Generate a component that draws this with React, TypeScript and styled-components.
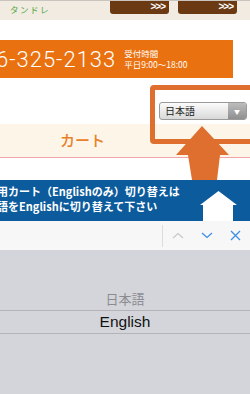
import React from 'react';
import styled, { createGlobalStyle } from 'styled-components';

const Global = createGlobalStyle`
  html, body { margin: 0; padding: 0; background: #fff; }
  body {
    width: 250px; height: 394px; overflow: hidden;
    font-family: "Noto Sans CJK JP", "Noto Sans", sans-serif;
  }
`;

const Screen = styled.div`
  width: 250px; height: 394px; overflow: hidden;
  display: flex; flex-direction: column; background: #fff;
`;

const Header = styled.header`
  flex: none; height: 20px; box-sizing: border-box;
  background: #f2ebe1; border-top: 1px solid #c9c4bd;
  display: flex; align-items: flex-start;
  padding: 0 13px 0 10px; overflow: hidden;
`;

const Logo = styled.div`
  flex: 1; margin-top: 3px;
  font-size: 8.5px; line-height: 10px; color: #4fa843; letter-spacing: 1.5px;
`;

const NavButton = styled.div`
  width: 59px; height: 26px; margin-top: -13px; margin-left: 9px;
  box-sizing: border-box; padding: 0 4px 0 0;
  background: #6b3a12; border-radius: 0 0 3px 3px;
  color: #fff; font-weight: 700;
  display: flex; flex-direction: column; align-items: flex-end;
`;

const NavLabel = styled.span`
  align-self: center; font-size: 9px; line-height: 14px; white-space: nowrap;
`;

const NavMore = styled.span`
  font-family: "Liberation Sans", sans-serif; font-weight: 700;
  font-size: 10px; line-height: 10px; letter-spacing: -1px;
`;

const PhoneBar = styled.div`
  flex: none; margin-top: 20px; width: 233px; height: 38px;
  background: #e9710f; display: flex; align-items: center; overflow: hidden;
`;

const PhoneNumber = styled.div`
  margin-left: -4px; font-family: Roboto, "Liberation Sans", sans-serif;
  font-weight: 300; font-size: 22px; letter-spacing: 1px; color: #fff; white-space: nowrap;
`;

const Hours = styled.div`
  margin-left: 8px; color: #fff; font-size: 8.5px; line-height: 11px; white-space: nowrap;
`;

const CartSection = styled.section`
  flex: none; position: relative; height: 102px; padding-top: 46px; box-sizing: border-box;
`;

const CartBand = styled.div`
  height: 34px; box-sizing: border-box; background: #fcf5e8;
  border-bottom: 1px solid #f3a3ab;
  padding-left: 60px; line-height: 32px;
  color: #e8802a; font-size: 15px; font-weight: 500;
`;

const Highlight = styled.div`
  position: absolute; top: 7px; left: 150px; width: 110px; height: 59px;
  box-sizing: border-box; border: 5px solid #df6f2f; border-radius: 4px;
  padding: 12px 0 0 4px;
`;

const Select = styled.div`
  width: 88px; height: 18px; box-sizing: border-box;
  border: 1px solid #9a9a9a; border-radius: 3px; overflow: hidden;
  background: linear-gradient(#fbfbfb, #d9d9d9);
  display: flex; align-items: center;
`;

const SelectText = styled.span`
  flex: 1; padding-left: 5px; font-size: 10px; color: #222; line-height: 16px;
`;

const SelectHandle = styled.span`
  width: 18px; height: 100%;
  background: linear-gradient(#bdbdbd, #8f8f8f);
  display: flex; align-items: center; justify-content: center;
  color: #fff; font-size: 6px;
`;

const OrangeArrow = styled.svg`
  position: absolute; left: 176px; top: 48px;
`;

const InfoBar = styled.div`
  flex: none; height: 41px; background: #0c5b9c;
  display: flex; align-items: flex-end; overflow: hidden;
`;

const InfoText = styled.div`
  flex: 1; align-self: flex-start; margin: 4px 0 0 -3px;
  color: #fff; font-weight: 700; font-size: 11px; line-height: 15px; white-space: nowrap;
`;

const WhiteArrow = styled.svg`
  flex: none; margin-right: 13px;
`;

const Toolbar = styled.div`
  flex: none; height: 29px; background: #f7f7f7;
  display: flex; align-items: center;
`;

const ToolSpacer = styled.div`flex: 1;`;

const ToolDivider = styled.div`
  width: 1px; height: 22px; background: #dcdcdc;
`;

const ToolButton = styled.div`
  width: 29px; height: 29px; display: flex; align-items: center; justify-content: center;
`;

const Picker = styled.div`
  flex: 1; background: #d4d5db; padding-top: 38px;
  display: flex; flex-direction: column;
  font-family: "Liberation Sans", "Noto Sans CJK JP", sans-serif;
`;

const PickerOption = styled.div`
  height: 22px; line-height: 22px; text-align: center;
  font-size: 13px; color: #8c8c90;
  font-family: "Noto Sans CJK JP", sans-serif;
`;

const PickerSelected = styled.div`
  height: 24px; box-sizing: border-box; line-height: 22px; text-align: center;
  border-top: 1px solid #b3b3b8; border-bottom: 1px solid #b3b3b8;
  font-size: 15.5px; color: #111;
`;

export default function App() {
  return (
    <>
      <Global />
      <Screen>
        <Header>
          <Logo>タンドレ</Logo>
          <NavButton>
            <NavLabel>資料請求</NavLabel>
            <NavMore>&gt;&gt;&gt;</NavMore>
          </NavButton>
          <NavButton>
            <NavLabel>マイページ</NavLabel>
            <NavMore>&gt;&gt;&gt;</NavMore>
          </NavButton>
        </Header>

        <PhoneBar>
          <PhoneNumber>6-325-2133</PhoneNumber>
          <Hours>
            <div>受付時間</div>
            <div>平日9:00～18:00</div>
          </Hours>
        </PhoneBar>

        <CartSection>
          <CartBand>カート</CartBand>
          <Highlight>
            <Select>
              <SelectText>日本語</SelectText>
              <SelectHandle>▼</SelectHandle>
            </Select>
          </Highlight>
          <OrangeArrow width="54" height="54" viewBox="0 0 54 54">
            <path d="M26 0 L53 29 L44 29 L41 54 L16 54 L12 29 L0 29 Z" fill="#df6f2f" />
          </OrangeArrow>
        </CartSection>

        <InfoBar>
          <InfoText>
            <div>用カート（Englishのみ）切り替えは</div>
            <div>語をEnglishに切り替えて下さい</div>
          </InfoText>
          <WhiteArrow width="37" height="30" viewBox="0 0 37 30">
            <path d="M18.5 0 L37 14 L33 14 L33 30 L3 30 L3 14 L0 14 Z" fill="#fff" />
          </WhiteArrow>
        </InfoBar>

        <Toolbar>
          <ToolSpacer />
          <ToolDivider />
          <ToolButton>
            <svg width="12" height="7" viewBox="0 0 12 7">
              <polyline points="1,6 6,1.5 11,6" fill="none" stroke="#c9c9cd" strokeWidth="1.3" />
            </svg>
          </ToolButton>
          <ToolButton>
            <svg width="12" height="7" viewBox="0 0 12 7">
              <polyline points="1,1 6,5.5 11,1" fill="none" stroke="#3d8ee6" strokeWidth="1.3" />
            </svg>
          </ToolButton>
          <ToolButton>
            <svg width="11" height="11" viewBox="0 0 11 11">
              <path d="M1 1 L10 10 M10 1 L1 10" fill="none" stroke="#3d8ee6" strokeWidth="1.3" />
            </svg>
          </ToolButton>
        </Toolbar>

        <Picker>
          <PickerOption>日本語</PickerOption>
          <PickerSelected>English</PickerSelected>
        </Picker>
      </Screen>
    </>
  );
}
